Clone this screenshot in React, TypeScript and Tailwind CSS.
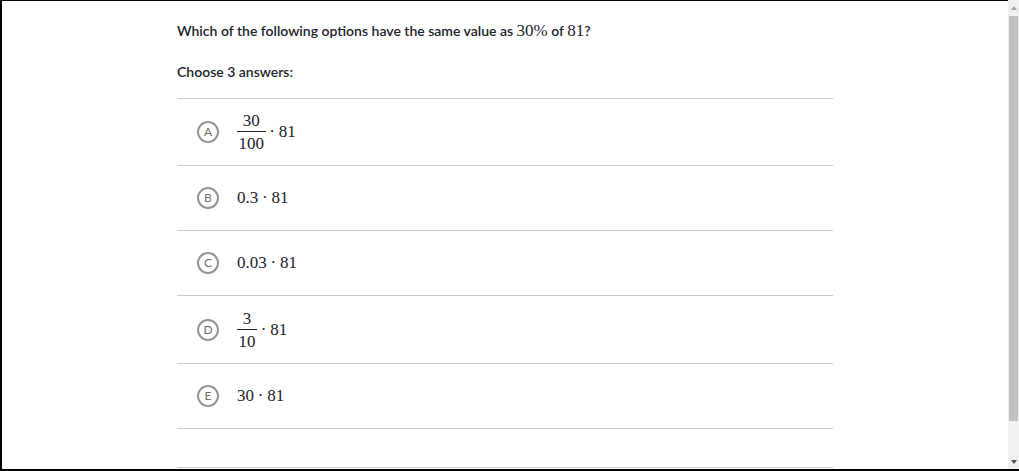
import React from 'react'

type Choice = {
  letter: string
  height: string
  content: React.ReactNode
}

const Frac: React.FC<{ num: string; den: string }> = ({ num, den }) => (
  <span className="inline-flex flex-col items-center align-middle">
    <span className="pb-[2px] leading-[17px]">{num}</span>
    <span className="h-px w-full bg-[#21242c]" />
    <span className="px-[1.5px] pt-[3px] leading-[17px]">{den}</span>
  </span>
)

const Dot = () => <span className="mx-[3.8px]">·</span>

const choices: Choice[] = [
  {
    letter: 'A',
    height: 'h-[67px]',
    content: (
      <span className="flex items-center">
        <Frac num="30" den="100" />
        <Dot />
        81
      </span>
    ),
  },
  {
    letter: 'B',
    height: 'h-[65px]',
    content: (
      <span>
        0.3
        <Dot />
        81
      </span>
    ),
  },
  {
    letter: 'C',
    height: 'h-[65px]',
    content: (
      <span>
        0.03
        <Dot />
        81
      </span>
    ),
  },
  {
    letter: 'D',
    height: 'h-[68px]',
    content: (
      <span className="flex items-center">
        <Frac num="3" den="10" />
        <Dot />
        81
      </span>
    ),
  },
  {
    letter: 'E',
    height: 'h-[65px]',
    content: (
      <span>
        30
        <Dot />
        81
      </span>
    ),
  },
]

const math = "font-['Liberation_Serif',serif] text-[17px] font-normal"

export default function App() {
  return (
    <div className="flex h-[471px] w-[1019px] overflow-hidden border-b-2 border-black bg-white font-['Lato',sans-serif] text-[#21242c]">
      <div className="flex-1 border-l-2 border-t border-black pl-[175px]">
        <p className="mt-[20px] text-[14px] font-semibold leading-[20px]">
          Which of the following options have the same value as{' '}
          <span className={math}>30%</span> of <span className={math}>81</span>?
        </p>
        <p className="mt-[21px] text-[14px] font-semibold leading-[20px]">Choose 3 answers:</p>

        <ul className="mt-[16px] w-[656px] border-b border-[#c9c9c9]">
          {choices.map((c) => (
            <li
              key={c.letter}
              className={`flex items-center border-t border-[#c9c9c9] pl-[20px] ${c.height}`}
            >
              <span className="flex h-[22px] w-[22px] shrink-0 items-center justify-center rounded-full border-2 border-[#949494] text-[12px] leading-none text-[#6f6f6f]">
                {c.letter}
              </span>
              <span className={`ml-[18px] ${math}`}>{c.content}</span>
            </li>
          ))}
        </ul>
        <div className="mt-[38px] w-[656px] border-t border-[#c9c9c9]" />
      </div>

      <div className="flex w-[11px] flex-col items-center bg-[#f0f0f0]">
        <span className="mt-[6px] h-0 w-0 border-x-[3.5px] border-b-[4px] border-x-transparent border-b-[#a3a3a3]" />
        <span className="mt-[6px] h-[405px] w-[9px] bg-[#c1c1c1]" />
        <span className="mt-auto mb-[5px] h-0 w-0 border-x-[3.5px] border-t-[4px] border-x-transparent border-t-[#505050]" />
      </div>
    </div>
  )
}
